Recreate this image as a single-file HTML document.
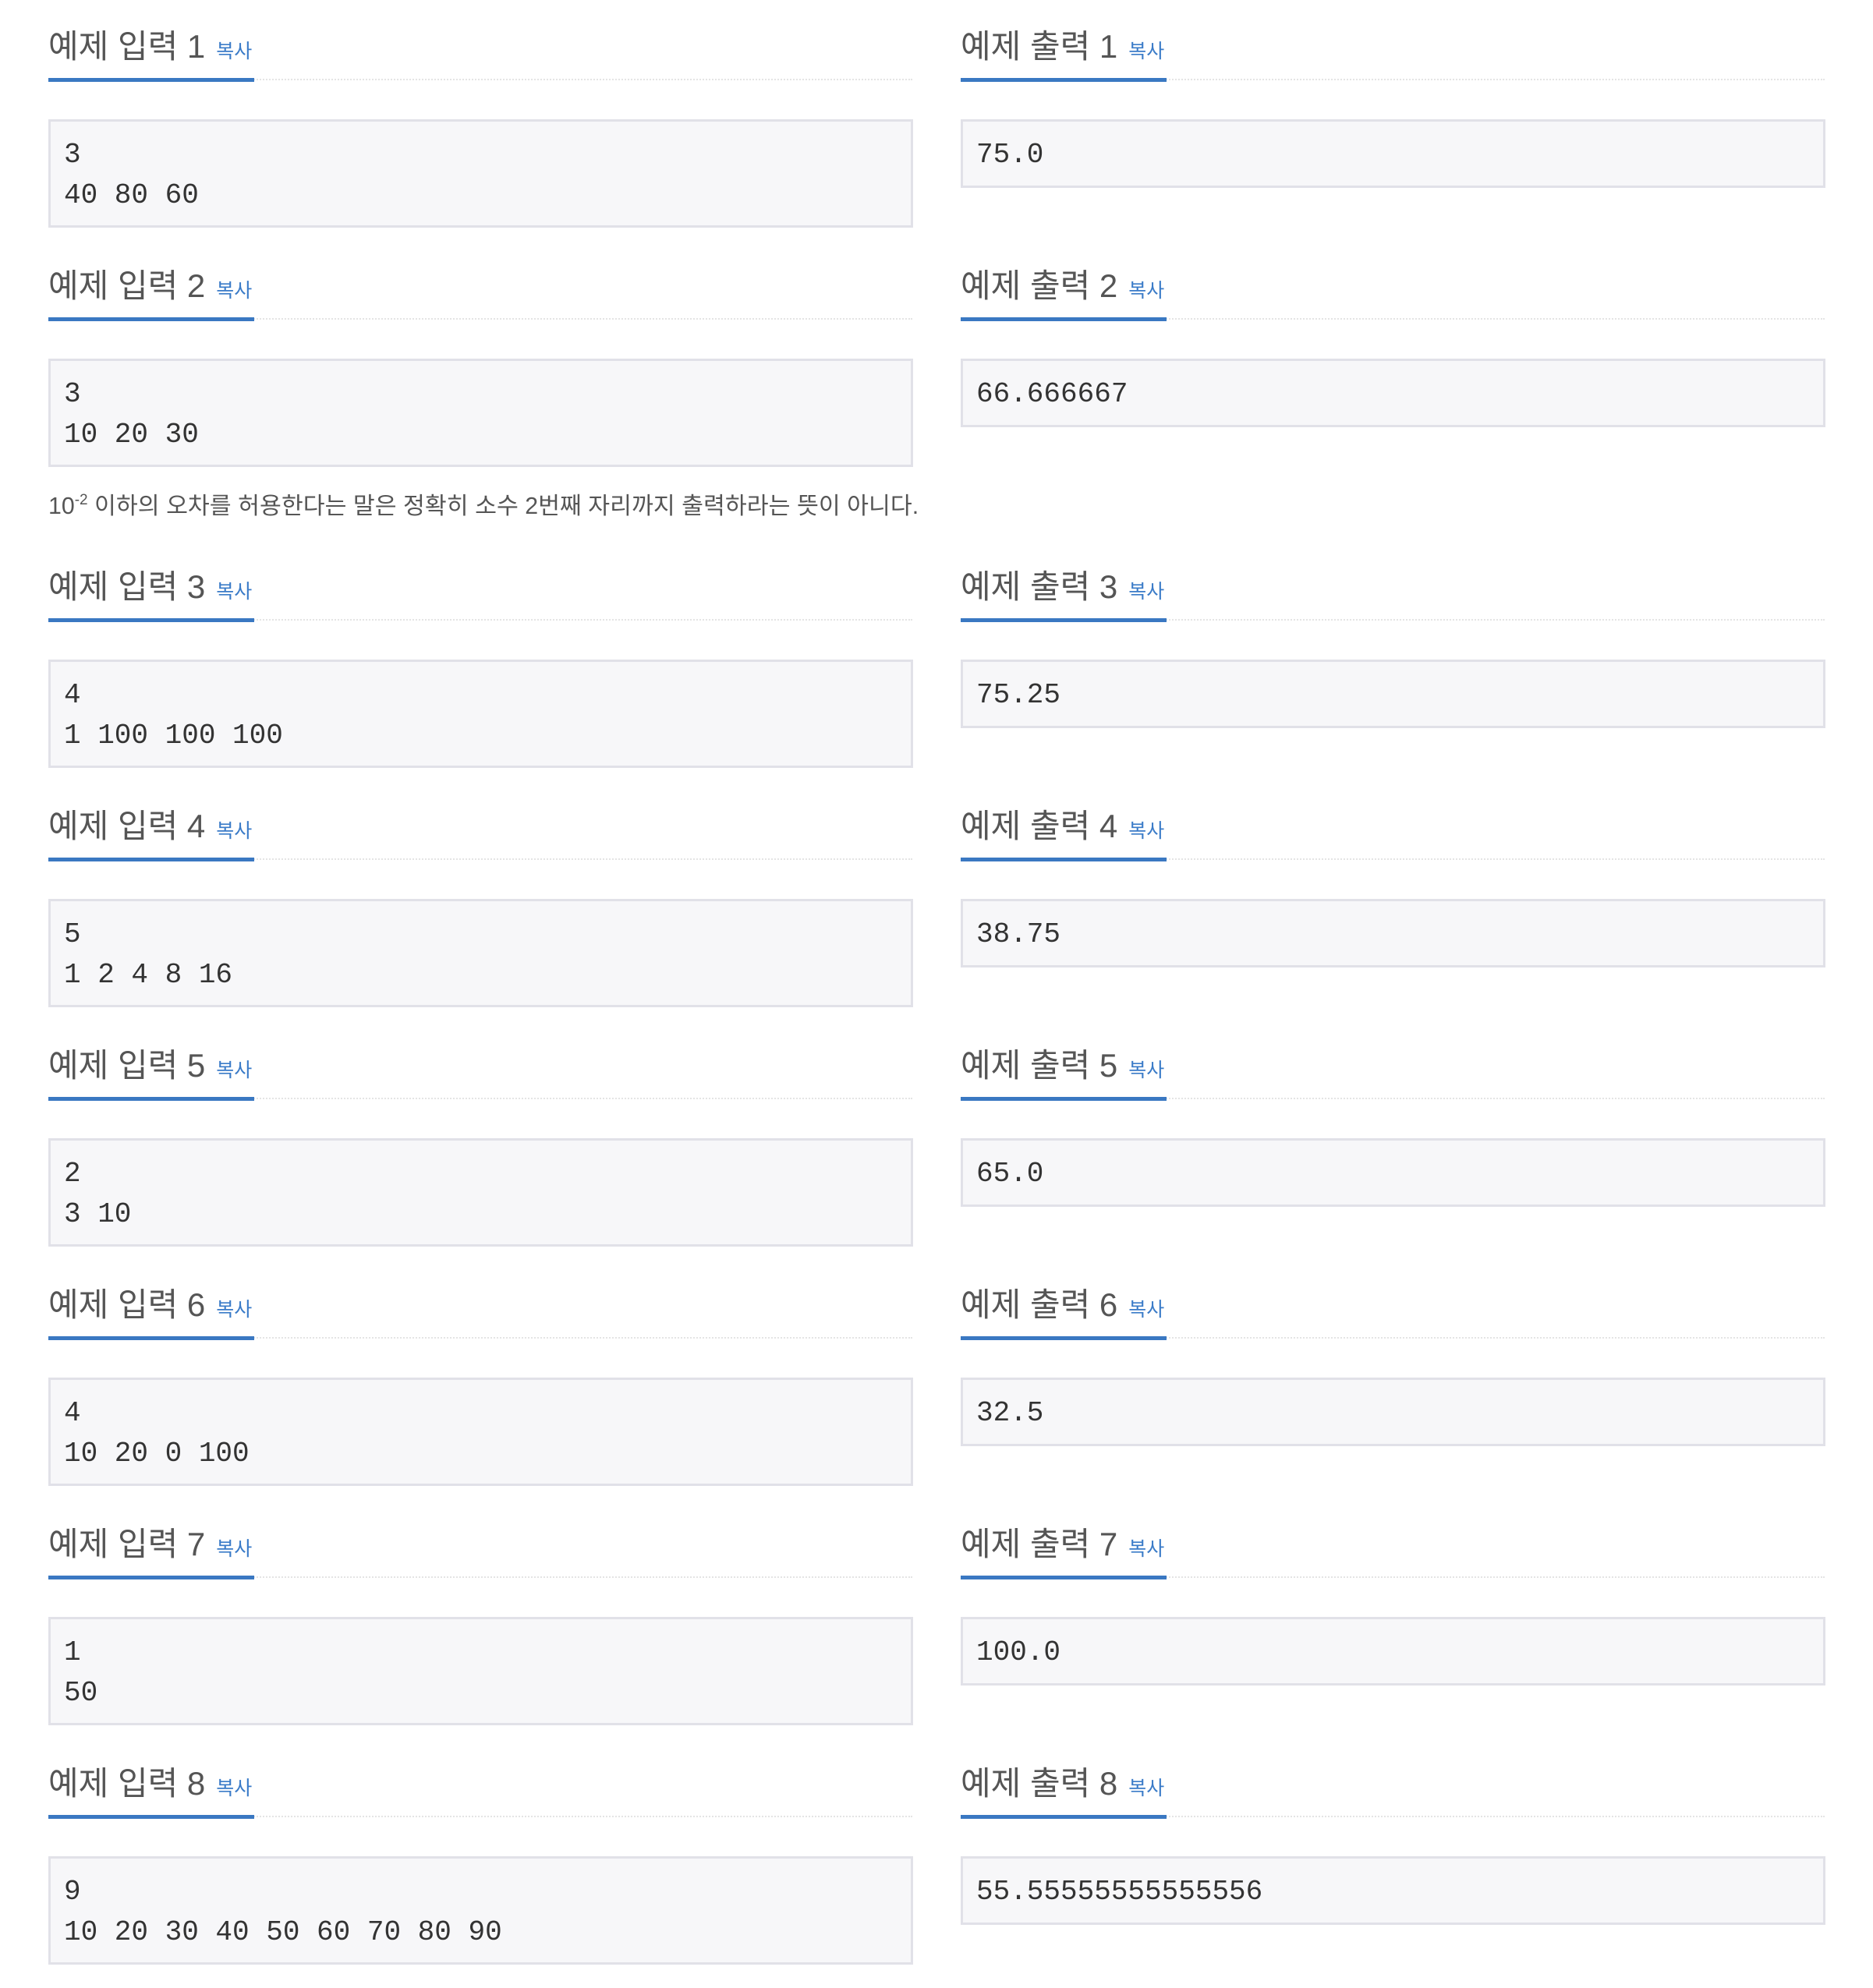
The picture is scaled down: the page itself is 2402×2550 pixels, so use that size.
<!DOCTYPE html>
<html><head><meta charset="utf-8"><style>
body{margin:0;width:2402px;height:2550px;background:#fff;position:relative;overflow:hidden;font-family:"Liberation Sans","Noto Sans CJK KR",sans-serif}
.h{position:absolute;height:50px;line-height:50px;font-size:42px;color:#555;white-space:nowrap}
.h span{font-size:25px;color:#3a7bc8;margin-left:14px}
.dl{position:absolute;height:0;border-top:2px dotted #e4e4e4}
.bl{position:absolute;height:5px;background:#3a78c2;width:264px}
.box{position:absolute;background:#f7f7f9;border:3px solid #e1e1e8;box-sizing:border-box;font-family:"Liberation Mono",monospace;font-size:36px;color:#333;line-height:52px;padding:17px 0 0 17px;white-space:pre}
.note{position:absolute;left:62px;top:629px;font-size:30.3px;color:#555;line-height:42px;white-space:nowrap}
</style></head><body>
<div id="c"></div>
<div class="note">10<sup style="font-size:19px;vertical-align:12px;line-height:0">-2</sup> 이하의 오차를 허용한다는 말은 정확히 소수 2번째 자리까지 출력하라는 뜻이 아니다.</div>
<script>
var ins=[["3","40 80 60"],["3","10 20 30"],["4","1 100 100 100"],["5","1 2 4 8 16"],["2","3 10"],["4","10 20 0 100"],["1","50"],["9","10 20 30 40 50 60 70 80 90"]];
var outs=["75.0","66.666667","75.25","38.75","65.0","32.5","100.0","55.55555555555556"];
var cs=[60,367,753,1060,1367,1674,1981,2288];
var W=1109,R=1232;
var h="";
for(var i=0;i<8;i++){var c=cs[i];
[[62,"입력"],[R,"출력"]].forEach(function(p,j){
h+='<div class="h" style="left:'+p[0]+'px;top:'+(c-25)+'px">예제 '+p[1]+' '+(i+1)+'<span>복사</span></div>';
h+='<div class="dl" style="left:'+p[0]+'px;width:'+(W-1)+'px;top:'+(c+41)+'px"></div>';
h+='<div class="bl" style="left:'+p[0]+'px;top:'+(c+40)+'px"></div>';
});
h+='<div class="box" style="left:62px;width:'+W+'px;top:'+(c+93)+'px;height:139px">'+ins[i].join("\n")+'</div>';
h+='<div class="box" style="left:'+R+'px;width:'+W+'px;top:'+(c+93)+'px;height:88px">'+outs[i]+'</div>';
}
document.getElementById("c").innerHTML=h;
</script>
</body></html>
